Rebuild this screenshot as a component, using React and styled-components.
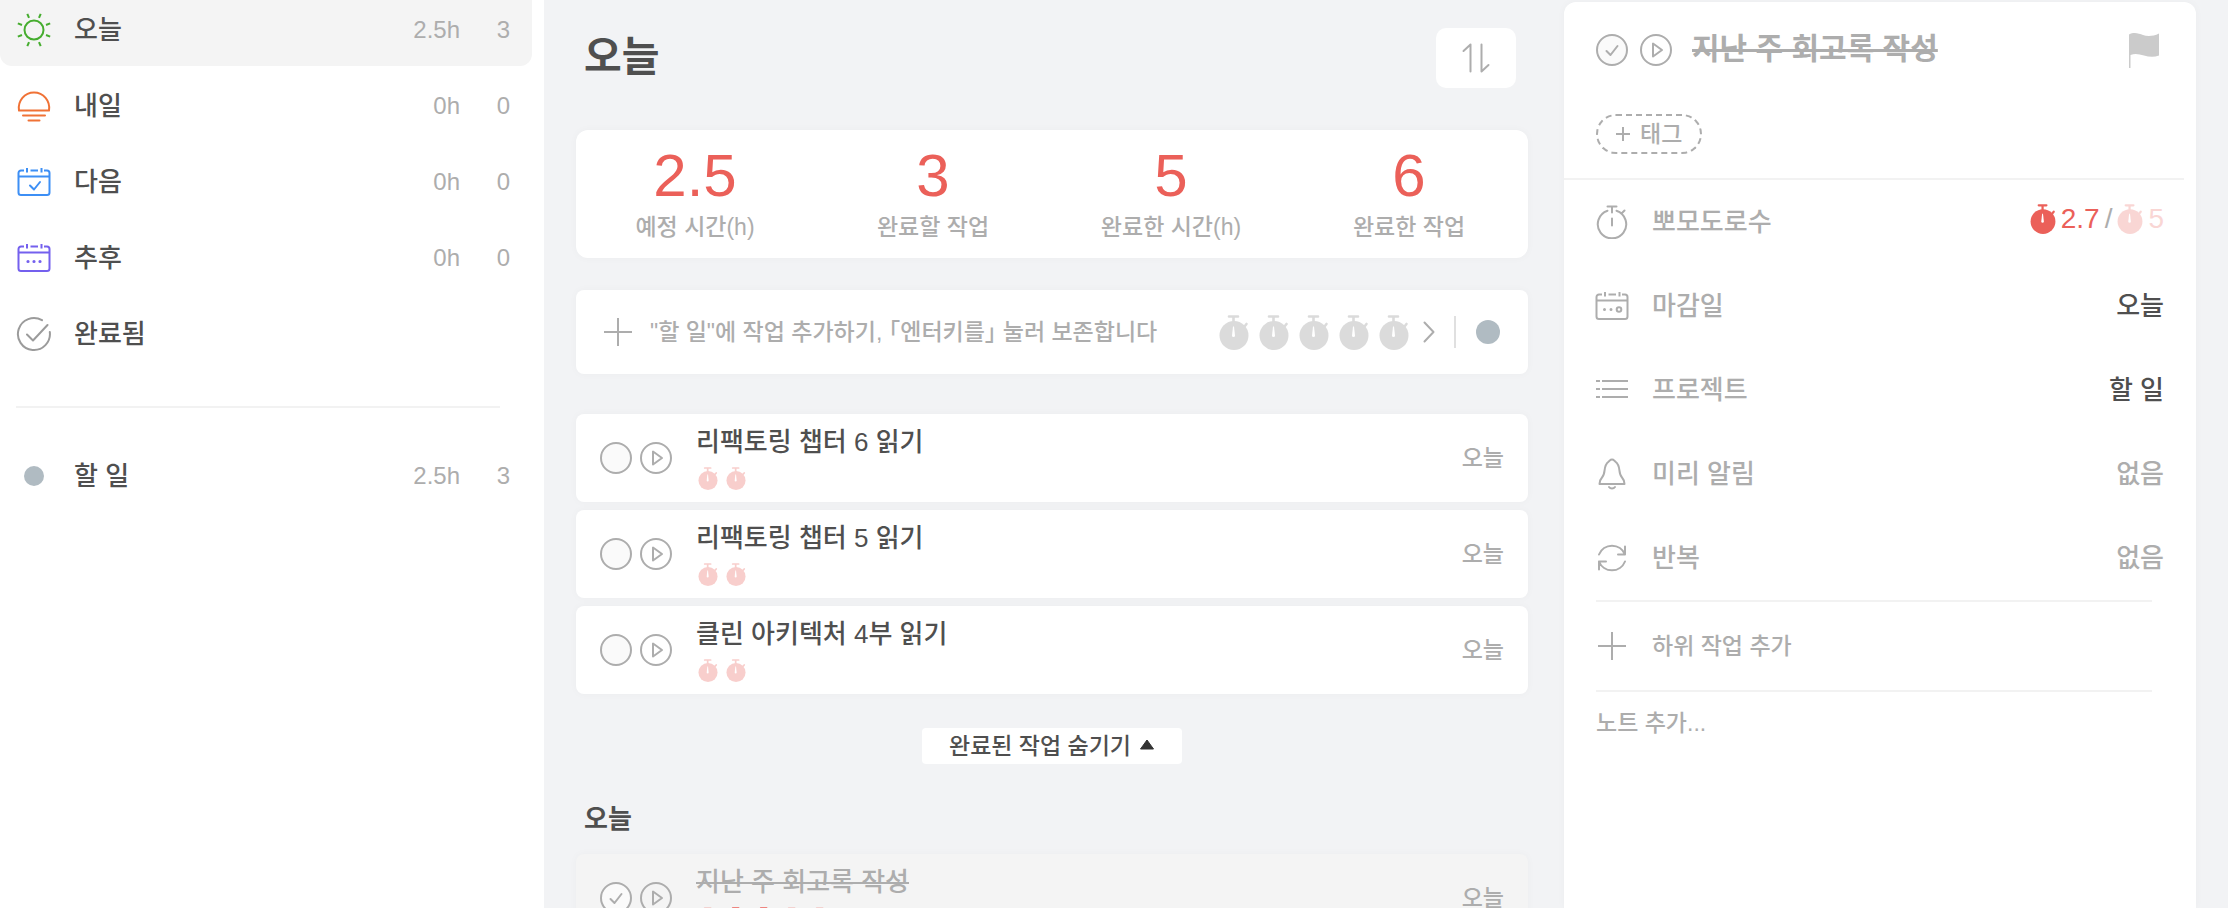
import React, { useState } from 'react'
import styled, { createGlobalStyle } from 'styled-components'

const GlobalStyle = createGlobalStyle`
    * {
        box-sizing: border-box;
    }
    body {
        margin: 0;
        background: #f2f3f5;
        color: #4f4f4f;
        font-family: 'Liberation Sans', 'Noto Sans CJK KR', sans-serif;
        font-size: 26px;
        font-weight: 500;
    }
    button, input, textarea {
        font-family: inherit;
        font-weight: inherit;
        color: inherit;
        background: none;
        border: none;
        padding: 0;
        margin: 0;
    }
    button {
        cursor: pointer;
    }
    svg {
        display: block;
        flex: none;
    }
    h1, h2, p, dl, dd, dt, ul {
        margin: 0;
        padding: 0;
    }
    ul {
        list-style: none;
    }
`
const Page = styled.div`
    display: grid;
    grid-template-columns: 544fr 1020fr 632fr 32px;
    height: 100vh;
    overflow: hidden;
`

/* sidebar */
const Sidebar = styled.nav`
    background: #fff;
    padding-right: 12px;
`
const NavItem = styled.a`
    display: flex;
    align-items: center;
    height: ${props => props.$first ? '66px' : '76px'};
    margin-bottom: ${props => props.$first ? '2px' : '0'};
    padding: 0 22px 0 16px;
    padding-bottom: ${props => props.$first ? '6px' : '0'};
    border-radius: 0 0 12px 12px;
    background: ${props => props.$first ? '#f4f4f4' : 'transparent'};
    color: #4f4f4f;
    text-decoration: none;
`
const NavIcon = styled.span`
    display: flex;
    justify-content: center;
    width: 36px;
`
const NavLabel = styled.span`
    flex: 1;
    margin-left: 22px;
    line-height: 38px;
`
const NavHours = styled.span`
    color: #adadad;
    font-size: 24px;
`
const NavCount = styled.span`
    width: 50px;
    text-align: right;
    color: #adadad;
    font-size: 24px;
`
const SidebarLine = styled.hr`
    height: 2px;
    margin: 34px 32px 30px 16px;
    border: none;
    background: #f2f2f2;
`
const Dot = styled.span`
    flex: none;
    width: ${props => props.$size}px;
    height: ${props => props.$size}px;
    border-radius: 50%;
    background: #b0bbc2;
`

/* middle column */
const Main = styled.main`
    padding: 28px 36px 0 32px;
    overflow: hidden;
`
const Header = styled.header`
    display: flex;
    justify-content: space-between;
    align-items: center;
    padding: 0 12px 0 8px;
    margin-bottom: 42px;
`
const Title = styled.h1`
    font-size: 41px;
    line-height: 56px;
    padding-bottom: 2px;
`
const SortButton = styled.button`
    display: flex;
    align-items: center;
    justify-content: center;
    width: 80px;
    height: 60px;
    border-radius: 10px;
    background: #fff;
`
const Card = styled.div`
    background: #fff;
    border-radius: 8px;
    box-shadow: 0 0 8px rgba(0, 0, 0, 0.03);
`
const Stats = styled(Card).attrs({ as: 'dl' })`
    display: grid;
    grid-template-columns: repeat(4, 1fr);
    height: 128px;
    padding-top: 12px;
    border-radius: 12px;
    text-align: center;
`
const Stat = styled.div`
    display: flex;
    flex-direction: column-reverse;
    justify-content: flex-end;
`
const StatValue = styled.dd`
    color: #eb6059;
    font-size: 60px;
    line-height: 68px;
`
const StatLabel = styled.dt`
    color: #adadad;
    font-size: 23px;
    line-height: 34px;
`
const AddTask = styled(Card)`
    display: flex;
    align-items: center;
    height: 84px;
    margin: 32px 0 40px;
    padding: 0 28px;
`
const AddInput = styled.input`
    flex: 1;
    min-width: 0;
    margin-left: 18px;
    font-size: 23px;
    line-height: 34px;
    font-feature-settings: 'halt';
    outline: none;
    &::placeholder {
        color: #adadad;
        opacity: 1;
    }
`
const Timers = styled.span`
    display: flex;
    gap: ${props => props.$gap}px;
`
const MoreButton = styled.button`
    margin-left: 14px;
`
const Bar = styled.span`
    width: 2px;
    height: 32px;
    margin: 0 20px 0 19px;
    background: #e0e0e0;
`
const TaskList = styled.ul`
    display: flex;
    flex-direction: column;
    gap: 8px;
`
const Task = styled(Card).attrs({ as: 'li' })`
    display: flex;
    align-items: center;
    height: 88px;
    padding: 0 24px;
    background: ${props => props.$done ? '#f4f4f4' : '#fff'};
`
const TaskBody = styled.div`
    flex: 1;
    margin-left: 24px;
    padding-bottom: 4px;
    ${Timers} {
        padding-left: 2px;
    }
`
const TaskTitle = styled.p`
    font-size: 26px;
    line-height: 38px;
    margin-bottom: 6px;
    color: ${props => props.$done ? '#adadad' : '#4f4f4f'};
    text-decoration: ${props => props.$done ? 'line-through' : 'none'};
`
const TaskDay = styled.span`
    color: #adadad;
    font-size: 23px;
    line-height: 34px;
`
const CheckLabel = styled.label`
    display: grid;
    width: 32px;
    height: 32px;
    margin-right: ${props => props.$gap}px;
    cursor: pointer;
    > * {
        grid-area: 1 / 1;
    }
`
const CheckInput = styled.input.attrs({ type: 'checkbox' })`
    appearance: none;
    width: 32px;
    height: 32px;
    margin: 0;
    border: 2px solid #adadad;
    border-radius: 50%;
    background: #fafafa;
`
const HideButton = styled.button`
    display: flex;
    align-items: center;
    justify-content: center;
    gap: 8px;
    width: 260px;
    height: 36px;
    margin: 34px auto 36px;
    border-radius: 4px;
    background: #fff;
    font-size: 23px;
    line-height: 34px;
`
const GroupTitle = styled.h2`
    margin: 0 0 16px 8px;
    font-size: 26px;
    line-height: 38px;
`

/* detail panel */
const Detail = styled.aside`
    margin-top: 2px;
    background: #fff;
    border-radius: 12px 12px 0 0;
    box-shadow: 0 0 8px rgba(0, 0, 0, 0.03);
`
const DetailTop = styled.div`
    height: 176px;
    padding: 24px 32px 0;
`
const DetailHeader = styled.div`
    display: flex;
    align-items: center;
    height: 48px;
    margin-bottom: 40px;
`
const DetailTitle = styled.h2`
    flex: 1;
    margin-left: 20px;
    padding-bottom: 2px;
    color: #adadad;
    font-size: 30px;
    line-height: 46px;
    text-decoration: line-through;
`
const TagButton = styled.button`
    display: flex;
    align-items: center;
    gap: 10px;
    height: 40px;
    padding: 0 18px;
    border: 2px dashed #adadad;
    border-radius: 20px;
    color: #adadad;
    font-size: 23px;
    line-height: 34px;
`
const Line = styled.hr`
    height: 2px;
    margin: 0 ${props => props.$right}px 0 ${props => props.$left}px;
    border: none;
    background: #f2f2f2;
`
const Fields = styled.dl`
    color: #adadad;
`
const Field = styled.div`
    display: flex;
    align-items: center;
    height: 84px;
    padding: 0 32px;
    line-height: 38px;
`
const FieldName = styled.dt`
    display: flex;
    align-items: center;
    flex: 1;
    gap: 24px;
`
const FieldIcon = styled.span`
    display: flex;
    justify-content: center;
    width: 32px;
`
const FieldValue = styled.dd`
    display: flex;
    align-items: center;
    gap: 4px;
    color: ${props => props.$dark ? '#4f4f4f' : '#adadad'};
`
const PomodoroValue = styled(FieldValue)`
    gap: 5px;
    padding-bottom: 6px;
    font-size: 28px;
`
const Amount = styled.span`
    color: #eb6059;
    opacity: ${props => props.$faded ? 0.25 : 1};
`
const SubTask = styled.label`
    display: flex;
    align-items: center;
    height: 88px;
    padding: 0 32px;
`
const SubTaskInput = styled(AddInput)`
    margin-left: 24px;
`
const Note = styled.textarea`
    display: block;
    width: 100%;
    padding: 14px 32px;
    font-size: 23px;
    line-height: 34px;
    resize: none;
    outline: none;
    &::placeholder {
        color: #adadad;
        opacity: 1;
    }
`

const Icon = ({ w = 32, h = 32, color = '#adadad', children }) => (
    <svg width={w} height={h} viewBox={`0 0 ${w} ${h}`} fill="none" stroke={color} strokeWidth="2" strokeLinecap="round" strokeLinejoin="round" aria-hidden="true">
        {children}
    </svg>
)

const SunIcon = () => (
    <Icon w={36} h={36} color="#46ad2f">
        <circle cx="18" cy="18" r="9.5" />
        {[22.5, 67.5, 112.5, 157.5, 202.5, 247.5, 292.5, 337.5].map(a => (
            <path key={a} d="M31 18h4.500" transform={`rotate(${a} 18 18)`} strokeLinecap="butt" />
        ))}
    </Icon>
)
const SunsetIcon = () => (
    <Icon w={36} h={36} color="#f07236">
        <path d="M3 22.500a15.200 15.500 0 1 1 30 0z M7 27.500h22 M12.500 32.500h11" />
    </Icon>
)
const Calendar = ({ color, children }) => (
    <Icon w={34} h={32} color={color}>
        <path d="M7 4.500H4a2.500 2.500 0 0 0-2.500 2.500v19.500A2.500 2.500 0 0 0 4 29h26a2.500 2.500 0 0 0 2.500-2.500V7A2.500 2.500 0 0 0 30 4.500h-3 M13.500 4.500h7.500 M10 2v4.500 M24.500 2v4.500 M1.500 10.500h31" strokeLinecap="butt" />
        {children}
    </Icon>
)
const DoneIcon = () => (
    <Icon w={36} h={36} color="#9b9b9b">
        <path d="M26 4.200A16 16 0 1 0 33.800 16 M11 18.500l6 6L31.500 9" />
    </Icon>
)
const PlayIcon = () => (
    <Icon>
        <circle cx="16" cy="16" r="15" />
        <path d="M13 9.500v13l9-6.500z" />
    </Icon>
)
const PlusIcon = ({ size = 28, width = 2 }) => (
    <svg width={size} height={size} viewBox="0 0 28 28" stroke="#adadad" strokeWidth={width} aria-hidden="true">
        <path d="M14 0v28M0 14h28" />
    </svg>
)
const Timer = ({ size, color, opacity = 1 }) => (
    <svg width={size} height={Math.round(size * 1.16)} viewBox="0 0 30 35" opacity={opacity} aria-hidden="true">
        <circle cx="15" cy="20.500" r="14.500" fill={color} />
        <path d="M10 1.500h9M14.500 2v6M25.500 11.500l2-2.500" stroke={color} strokeWidth="2.600" strokeLinecap="round" />
        <path d="M14 11.500h1l1 9a1.500 1.500 0 0 1-3 0z" fill="#fff" />
    </svg>
)
const TimerLineIcon = () => (
    <Icon h={34}>
        <path d="M11.500 5.700A14.200 14.200 0 1 0 20.500 5.700 M11.500 1.500h9 M16 1.500v6 M25.500 8.500l3-3 M16 13.500v7" />
    </Icon>
)
const ListIcon = () => (
    <Icon>
        <path d="M0 7h4M6 7h26M0 15h4M6 15h26M0 23h4M6 23h26" strokeLinecap="butt" />
    </Icon>
)
const BellIcon = () => (
    <Icon>
        <path d="M16 1.500c-2 0-2 1.200-3.500 2.200C6.500 8 10.500 15 6 19.500c-1.800 2-2.500 4-2.500 6.500h25c0-2.500-.7-4.500-2.500-6.500-4.500-4.500-.5-11.500-6.500-15.800C18 2.700 18 1.500 16 1.500z M13 29c1.500 2 4.500 2 6 0" />
    </Icon>
)
const RepeatIcon = () => (
    <Icon>
        <path d="M3 12.500a14 14 0 0 1 26 0V4.500M29 12.500h-7 M29 19.500a14 14 0 0 1-26 0v8M3 19.500h7" />
    </Icon>
)

const navItems = [
    { label: '오늘', hours: '2.5h', count: 3, icon: <SunIcon /> },
    { label: '내일', hours: '0h', count: 0, icon: <SunsetIcon /> },
    { label: '다음', hours: '0h', count: 0, icon: <Calendar color="#3d8ff5"><path d="M13 19.500l4 4 6-7.500" /></Calendar> },
    { label: '추후', hours: '0h', count: 0, icon: <Calendar color="#7460ee"><path d="M11 19.500h0M17 19.500h0M23 19.500h0" strokeWidth="3.200" /></Calendar> },
    { label: '완료됨', icon: <DoneIcon /> },
]
const stats = [
    ['2.5', '예정 시간(h)'],
    ['3', '완료할 작업'],
    ['5', '완료한 시간(h)'],
    ['6', '완료한 작업'],
]
const tasks = ['리팩토링 챕터 6 읽기', '리팩토링 챕터 5 읽기', '클린 아키텍처 4부 읽기']
const fields = [
    {
        name: '마감일',
        value: '오늘',
        dark: true,
        icon: (
            <Calendar>
                <path d="M9.500 19.500h0M16 19.500h0" strokeWidth="3" />
                <circle cx="24" cy="19.500" r="2.300" />
            </Calendar>
        ),
    },
    { name: '프로젝트', value: '할 일', dark: true, icon: <ListIcon /> },
    { name: '미리 알림', value: '없음', icon: <BellIcon /> },
    { name: '반복', value: '없음', icon: <RepeatIcon /> },
]

const Check = ({ name, checked, gap = 8 }) => {
    const [done, setDone] = useState(Boolean(checked))
    return (
        <CheckLabel $gap={gap}>
            <CheckInput checked={done} onChange={() => setDone(!done)} aria-label={name} />
            {done && <Icon><path d="M10.500 17l4 4 7-9" /></Icon>}
        </CheckLabel>
    )
}

const TaskRow = ({ title, done, timers }) => (
    <Task $done={done}>
        <Check name={title} checked={done} />
        <button type="button" aria-label="시작"><PlayIcon /></button>
        <TaskBody>
            <TaskTitle $done={done}>{title}</TaskTitle>
            <Timers $gap={8}>
                {timers.map((faded, i) => <Timer key={i} size={20} color="#eb6059" opacity={faded ? 0.3 : 1} />)}
            </Timers>
        </TaskBody>
        <TaskDay>오늘</TaskDay>
    </Task>
)

const App = () => {
    const [showDone, setShowDone] = useState(true)

    return (
        <Page>
            <GlobalStyle />
            <Sidebar>
                {navItems.map((item, i) => (
                    <NavItem key={item.label} href="#" $first={i === 0}>
                        <NavIcon>{item.icon}</NavIcon>
                        <NavLabel>{item.label}</NavLabel>
                        {item.hours && <NavHours>{item.hours}</NavHours>}
                        {item.hours && <NavCount>{item.count}</NavCount>}
                    </NavItem>
                ))}
                <SidebarLine />
                <NavItem href="#">
                    <NavIcon><Dot $size={20} /></NavIcon>
                    <NavLabel>할 일</NavLabel>
                    <NavHours>2.5h</NavHours>
                    <NavCount>3</NavCount>
                </NavItem>
            </Sidebar>

            <Main>
                <Header>
                    <Title>오늘</Title>
                    <SortButton type="button" aria-label="정렬">
                        <Icon w={28} h={30}><path d="M1.500 8l7-6.500v27M19.500 1.500v27l7-6.500" /></Icon>
                    </SortButton>
                </Header>
                <Stats>
                    {stats.map(([value, label]) => (
                        <Stat key={label}>
                            <StatLabel>{label}</StatLabel>
                            <StatValue>{value}</StatValue>
                        </Stat>
                    ))}
                </Stats>
                <AddTask>
                    <PlusIcon />
                    <AddInput aria-label="작업 추가" placeholder={'"할 일"에 작업 추가하기, 「엔터키를」 눌러 보존합니다'} />
                    <Timers $gap={10}>
                        {[1, 2, 3, 4, 5].map(n => <Timer key={n} size={30} color="#dbdbdb" />)}
                    </Timers>
                    <MoreButton type="button" aria-label="더 보기">
                        <Icon w={12} h={22}><path d="M1.500 1.500L10.500 11l-9 9.500" /></Icon>
                    </MoreButton>
                    <Bar />
                    <Dot $size={24} />
                </AddTask>
                <TaskList>
                    {tasks.map(title => <TaskRow key={title} title={title} timers={[true, true]} />)}
                </TaskList>
                <HideButton type="button" onClick={() => setShowDone(!showDone)}>
                    완료된 작업 숨기기
                    <svg width="16" height="16" viewBox="0 0 16 16" aria-hidden="true"><path d="M8 2l6.500 9h-13z" fill="#333" stroke="#333" strokeLinejoin="round" /></svg>
                </HideButton>
                <GroupTitle>오늘</GroupTitle>
                {showDone && (
                    <TaskList>
                        <TaskRow title="지난 주 회고록 작성" done timers={[true, false, false, true, true]} />
                    </TaskList>
                )}
            </Main>

            <Detail>
                <DetailTop>
                    <DetailHeader>
                        <Check name="지난 주 회고록 작성" checked gap={12} />
                        <button type="button" aria-label="시작"><PlayIcon /></button>
                        <DetailTitle>지난 주 회고록 작성</DetailTitle>
                        <button type="button" aria-label="우선순위">
                            <svg width="36" height="36" viewBox="0 0 36 36" aria-hidden="true">
                                <path d="M1 2.500c5-3 10-1 14 .5s10 1.500 16-1.500v22c-5 2-10 1.500-15 0s-9-2.500-13.500-.5V36H1z" fill="#cbcbcb" />
                            </svg>
                        </button>
                    </DetailHeader>
                    <TagButton type="button"><PlusIcon size={14} width={4} />태그</TagButton>
                </DetailTop>
                <Line $left={0} $right={12} />
                <Fields>
                    <Field>
                        <FieldName><FieldIcon><TimerLineIcon /></FieldIcon>뽀모도로수</FieldName>
                        <PomodoroValue>
                            <Timer size={26} color="#eb6059" />
                            <Amount>2.7</Amount>
                            <span>/</span>
                            <Timer size={26} color="#eb6059" opacity={0.25} />
                            <Amount $faded>5</Amount>
                        </PomodoroValue>
                    </Field>
                    {fields.map(({ name, value, dark, icon }) => (
                        <Field key={name}>
                            <FieldName><FieldIcon>{icon}</FieldIcon>{name}</FieldName>
                            <FieldValue $dark={dark}>{value}</FieldValue>
                        </Field>
                    ))}
                </Fields>
                <Line $left={32} $right={44} />
                <SubTask>
                    <FieldIcon><PlusIcon /></FieldIcon>
                    <SubTaskInput aria-label="하위 작업 추가" placeholder="하위 작업 추가" />
                </SubTask>
                <Line $left={32} $right={44} />
                <Note aria-label="노트" rows={3} placeholder="노트 추가..." />
            </Detail>
        </Page>
    )
}

export default App
